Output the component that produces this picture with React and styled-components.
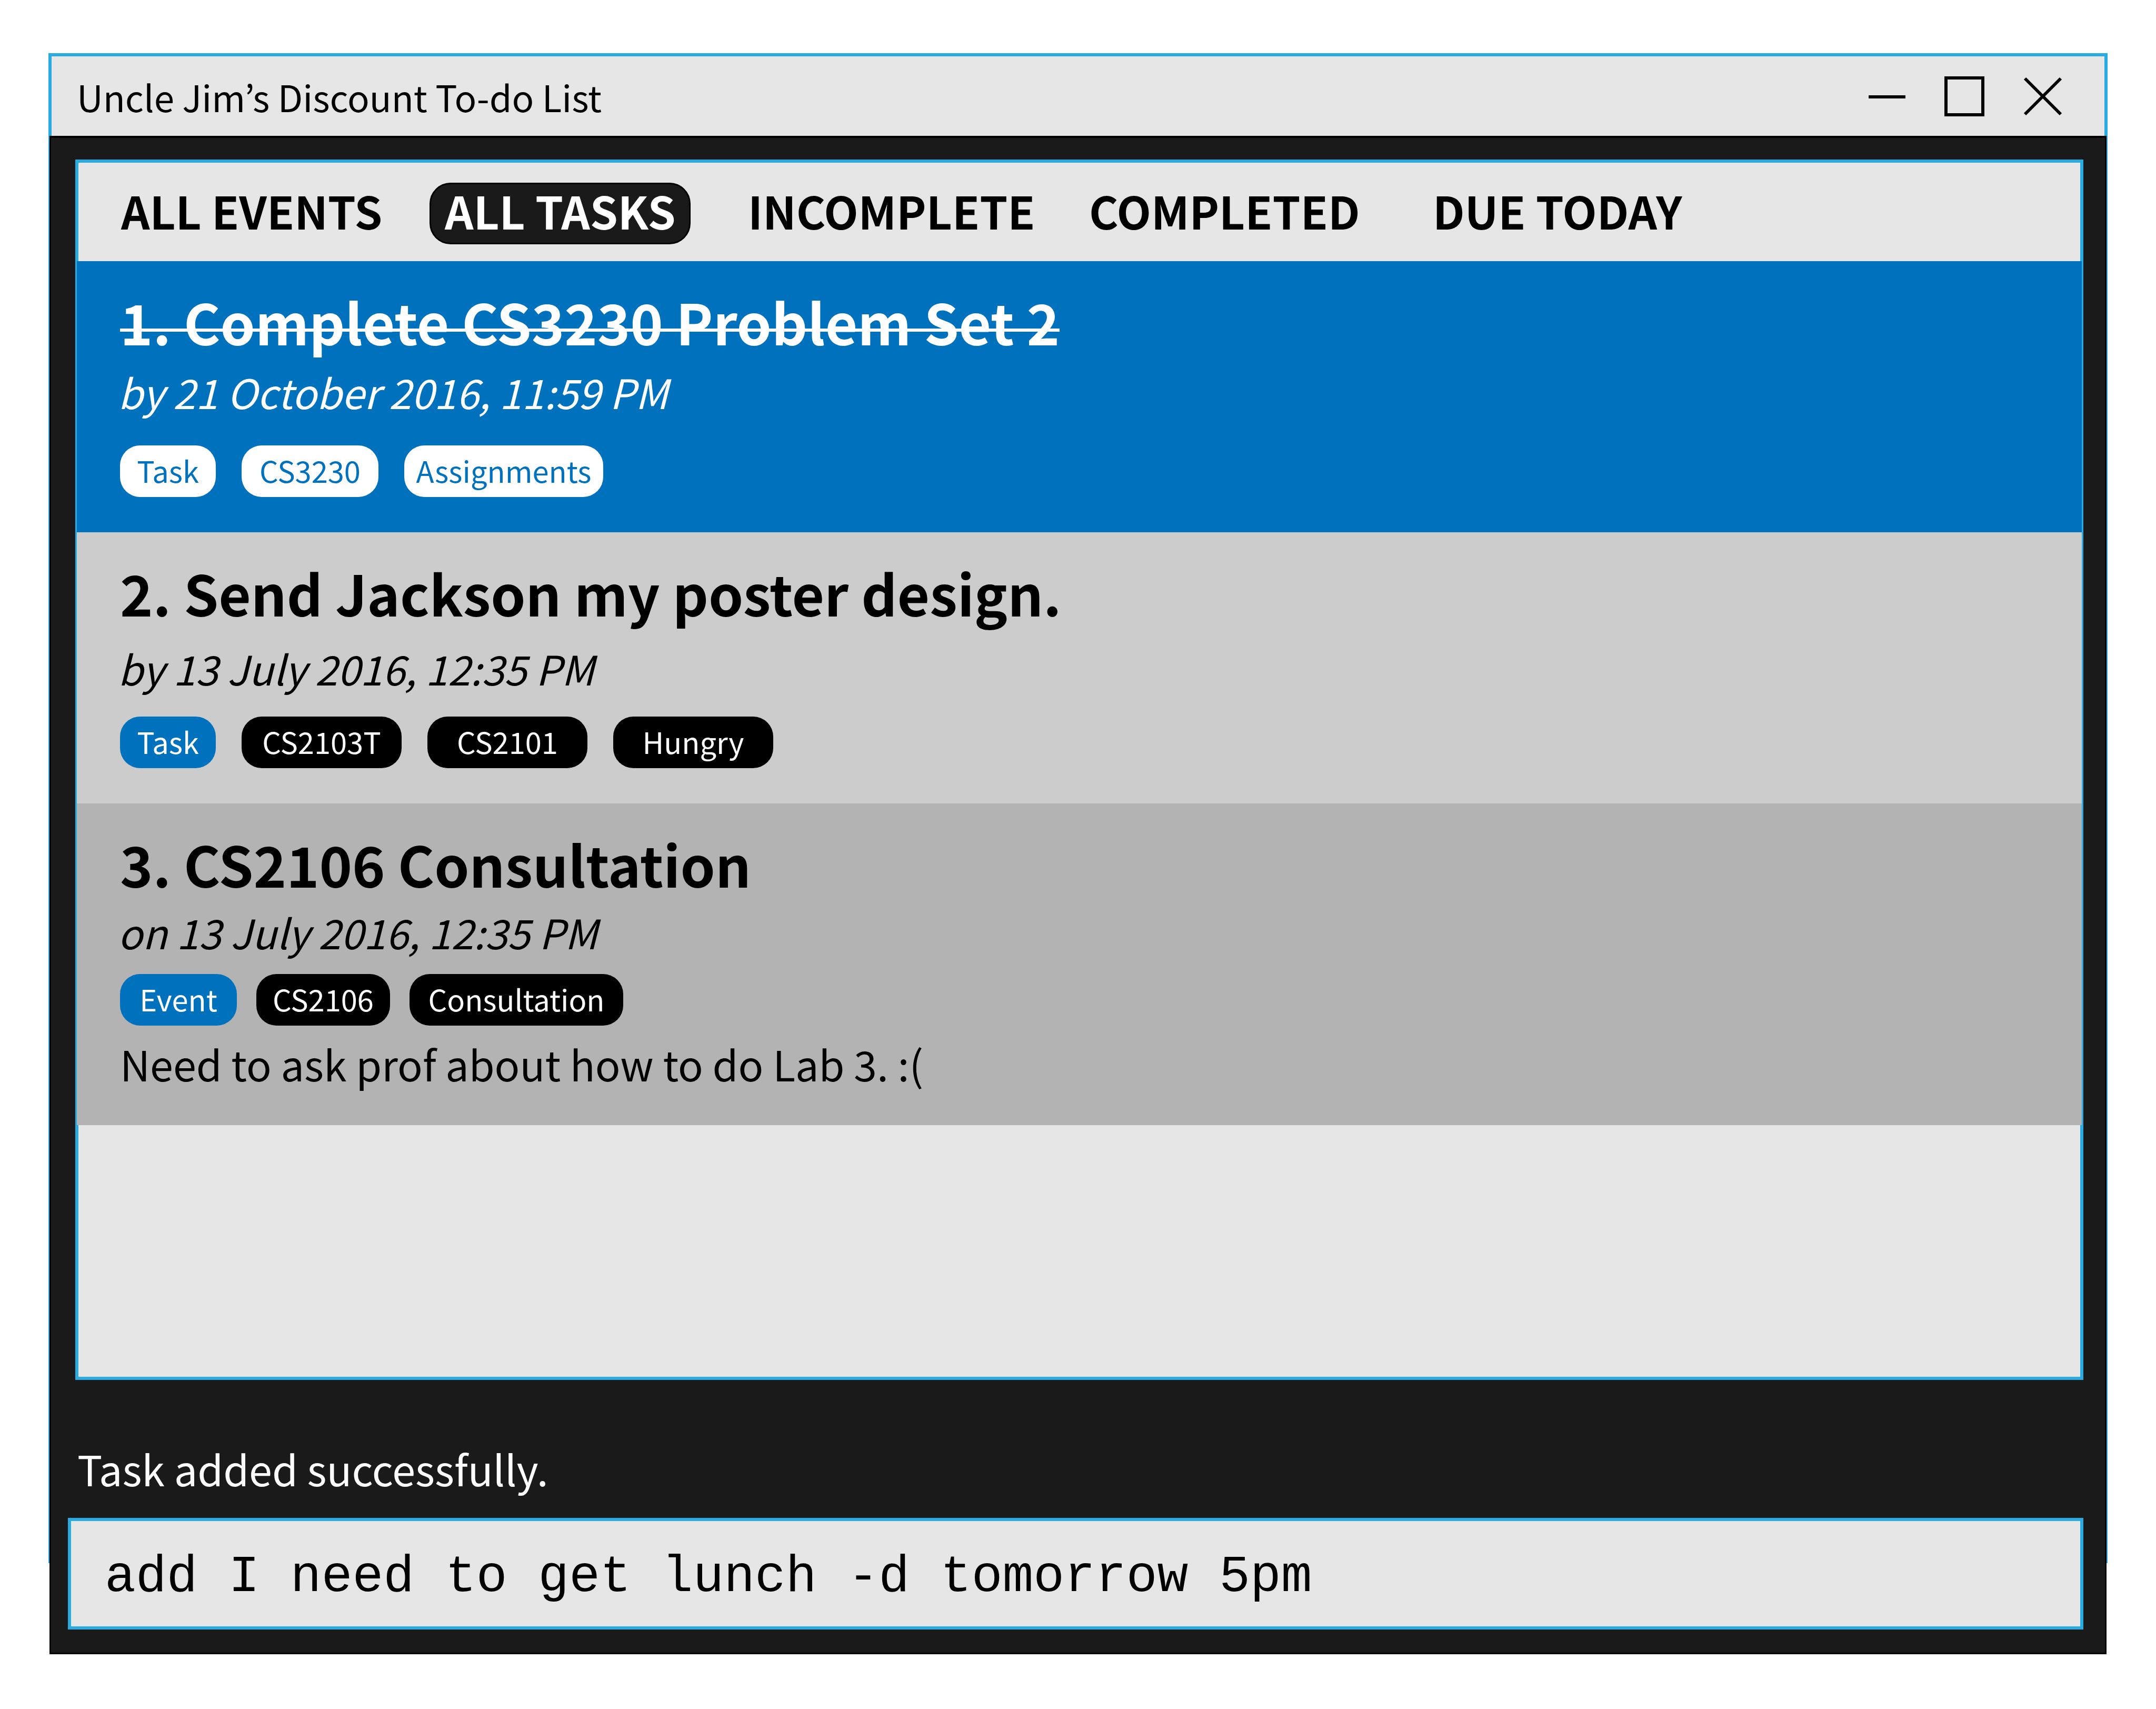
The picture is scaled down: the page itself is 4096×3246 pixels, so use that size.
import React, { useState } from "react";
import styled, { createGlobalStyle, css } from "styled-components";

const colors = {
  sky: "#29abe2",
  blue: "#0071bc",
  ink: "#1a1a1a",
  black: "#000",
  white: "#fff",
  paper: "#e6e6e6",
  silver: "#ccc",
  stone: "#b3b3b3",
};

const sans = '"Noto Sans CJK KR", "Noto Sans", sans-serif';
const mono = '"Liberation Mono", "DejaVu Sans Mono", monospace';

const GlobalStyle = createGlobalStyle`
  *, *::before, *::after { box-sizing: border-box; }
  body {
    margin: 0;
    background: ${colors.white};
    color: ${colors.black};
    font-family: ${sans};
  }
  h1, h2, p, ul { margin: 0; padding: 0; }
`;

const Page = styled.div`
  display: flex;
  min-height: 100vh;
  padding: 101px 92px 104px;
`;

const Window = styled.main`
  flex: 1;
  display: flex;
  flex-direction: column;
  min-width: 0;
  background: linear-gradient(${colors.sky}, ${colors.sky}) no-repeat 0 0 / 100% calc(100% - 173px);
`;

const TitleBar = styled.header`
  display: flex;
  align-items: center;
  justify-content: space-between;
  height: 157px;
  padding: 0 75px 0 48px;
  border: 6px solid ${colors.sky};
  border-bottom: 0;
  background: ${colors.paper};
`;

const AppName = styled.h1`
  font-size: 69px;
  font-weight: 400;
  line-height: 100px;
`;

const WindowControls = styled.div`
  display: flex;
  align-items: center;
  gap: 64px;
`;

const ControlButton = styled.button`
  display: flex;
  padding: 0;
  border: 0;
  background: none;
  color: inherit;

  svg {
    width: 84px;
    height: 84px;
    fill: none;
    stroke: currentColor;
    stroke-width: 6;
  }
`;

const Body = styled.div`
  flex: 1;
  display: flex;
  flex-direction: column;
  margin: 0 2px;
  padding: 41px 41px 44px 46px;
  border: 3px solid ${colors.black};
  border-top-width: 4px;
  background: ${colors.ink};
`;

const Panel = styled.section`
  flex: 1;
  border: 6px solid ${colors.sky};
  background: ${colors.paper};
`;

const Tabs = styled.nav`
  display: grid;
  grid-template-columns: 615px 576px 648px 653px auto;
  justify-items: start;
  padding: 38px 52px 32px;
`;

const Tab = styled.button`
  height: 117px;
  padding: 0 25px 14px 26px;
  border: 3px solid transparent;
  border-radius: 40px;
  background: none;
  color: ${colors.black};
  font: 600 85px/96px ${sans};
  white-space: nowrap;

  ${({ $active }) =>
    $active &&
    css`
      border-color: ${colors.black};
      background: ${colors.ink};
      color: ${colors.white};
    `}
`;

const tones = {
  selected: { row: colors.blue, text: colors.white, kind: colors.white, tag: colors.white, tagText: colors.blue },
  light: { row: colors.silver, text: colors.black, kind: colors.blue, tag: colors.black, tagText: colors.white },
  dark: { row: colors.stone, text: colors.black, kind: colors.blue, tag: colors.black, tagText: colors.white },
};

const Item = styled.article`
  margin: 0 -3px;
  padding: 54px 82px 67px;
  background: ${({ $tone }) => tones[$tone].row};
  color: ${({ $tone }) => tones[$tone].text};
`;

const ItemTitle = styled.h2`
  font-size: 106px;
  font-weight: 600;
  line-height: 120px;
`;

const Struck = styled.s`
  position: relative;
  text-decoration: none;

  &::after {
    content: "";
    position: absolute;
    top: 50%;
    left: 0;
    right: 0;
    height: 6px;
    margin-top: 14px;
    background: currentColor;
  }
`;

const When = styled.p`
  margin: ${({ $gap }) => $gap}px 0 0 -4px;
  font-size: 77px;
  font-style: italic;
  line-height: 100px;
`;

const Tags = styled.ul`
  display: flex;
  gap: ${({ $gap }) => $gap}px;
  margin-top: ${({ $top }) => $top}px;
  list-style: none;
`;

const Tag = styled.li`
  width: ${({ $width }) => $width}px;
  padding-bottom: 4px;
  border-radius: 38px;
  background: ${({ $tone, $kind }) => ($kind ? tones[$tone].kind : tones[$tone].tag)};
  color: ${({ $tone }) => tones[$tone].tagText};
  font-size: 56px;
  line-height: 94px;
  text-align: center;
  white-space: nowrap;
`;

const Note = styled.p`
  margin-top: 22px;
  font-size: 79px;
  line-height: 100px;
`;

const Status = styled.p`
  margin: 118px 4px 44px;
  color: ${colors.white};
  font-size: 79px;
  line-height: 100px;
`;

const CommandForm = styled.form`
  display: flex;
  margin-left: -14px;
`;

const CommandInput = styled.input`
  flex: 1;
  min-width: 0;
  height: 212px;
  padding: 12px 64px 0;
  border: 6px solid ${colors.sky};
  border-radius: 0;
  outline: 0;
  background: ${colors.paper};
  color: ${colors.black};
  font: 400 98px/160px ${mono};
`;

const tabs = ["ALL EVENTS", "ALL TASKS", "INCOMPLETE", "COMPLETED", "DUE TODAY"];

const items = [
  {
    title: "1. Complete CS3230 Problem Set 2",
    when: "by 21 October 2016, 11:59 PM",
    tone: "selected",
    done: true,
    whenGap: 24,
    tagsTop: 52,
    tagGap: 49,
    tags: [["Task", 182], ["CS3230", 260], ["Assignments", 378]],
  },
  {
    title: "2. Send Jackson my poster design.",
    when: "by 13 July 2016, 12:35 PM",
    tone: "light",
    whenGap: 34,
    tagsTop: 42,
    tagGap: 49,
    tags: [["Task", 182], ["CS2103T", 304], ["CS2101", 304], ["Hungry", 304]],
  },
  {
    title: "3. CS2106 Consultation",
    when: "on 13 July 2016, 12:35 PM",
    tone: "dark",
    whenGap: 20,
    tagsTop: 30,
    tagGap: 37,
    tags: [["Event", 222], ["CS2106", 254], ["Consultation", 406]],
    note: "Need to ask prof about how to do Lab 3. :(",
  },
];

export default function App() {
  const [active, setActive] = useState("ALL TASKS");
  const [command, setCommand] = useState("add I need to get lunch -d tomorrow 5pm");

  return (
    <>
      <GlobalStyle />
      <Page>
        <Window>
          <TitleBar>
            <AppName>Uncle Jim’s Discount To-do List</AppName>
            <WindowControls>
              <ControlButton type="button" aria-label="Minimize">
                <svg viewBox="0 0 84 84"><path d="M7 43H77" /></svg>
              </ControlButton>
              <ControlButton type="button" aria-label="Maximize">
                <svg viewBox="0 0 84 84"><rect x="6" y="7" width="70" height="70" /></svg>
              </ControlButton>
              <ControlButton type="button" aria-label="Close">
                <svg viewBox="0 0 84 84"><path d="M8 8L76 76M76 8L8 76" /></svg>
              </ControlButton>
            </WindowControls>
          </TitleBar>
          <Body>
            <Panel>
              <Tabs>
                {tabs.map((name) => (
                  <Tab key={name} type="button" $active={name === active} onClick={() => setActive(name)}>
                    {name}
                  </Tab>
                ))}
              </Tabs>
              {items.map((item) => (
                <Item key={item.title} $tone={item.tone}>
                  <ItemTitle>{item.done ? <Struck>{item.title}</Struck> : item.title}</ItemTitle>
                  <When $gap={item.whenGap}>{item.when}</When>
                  <Tags $top={item.tagsTop} $gap={item.tagGap}>
                    {item.tags.map(([label, width], i) => (
                      <Tag key={label} $tone={item.tone} $kind={i === 0} $width={width}>
                        {label}
                      </Tag>
                    ))}
                  </Tags>
                  {item.note && <Note>{item.note}</Note>}
                </Item>
              ))}
            </Panel>
            <Status role="status">Task added successfully.</Status>
            <CommandForm onSubmit={(e) => e.preventDefault()}>
              <CommandInput
                type="text"
                aria-label="Command"
                value={command}
                onChange={(e) => setCommand(e.target.value)}
              />
            </CommandForm>
          </Body>
        </Window>
      </Page>
    </>
  );
}
